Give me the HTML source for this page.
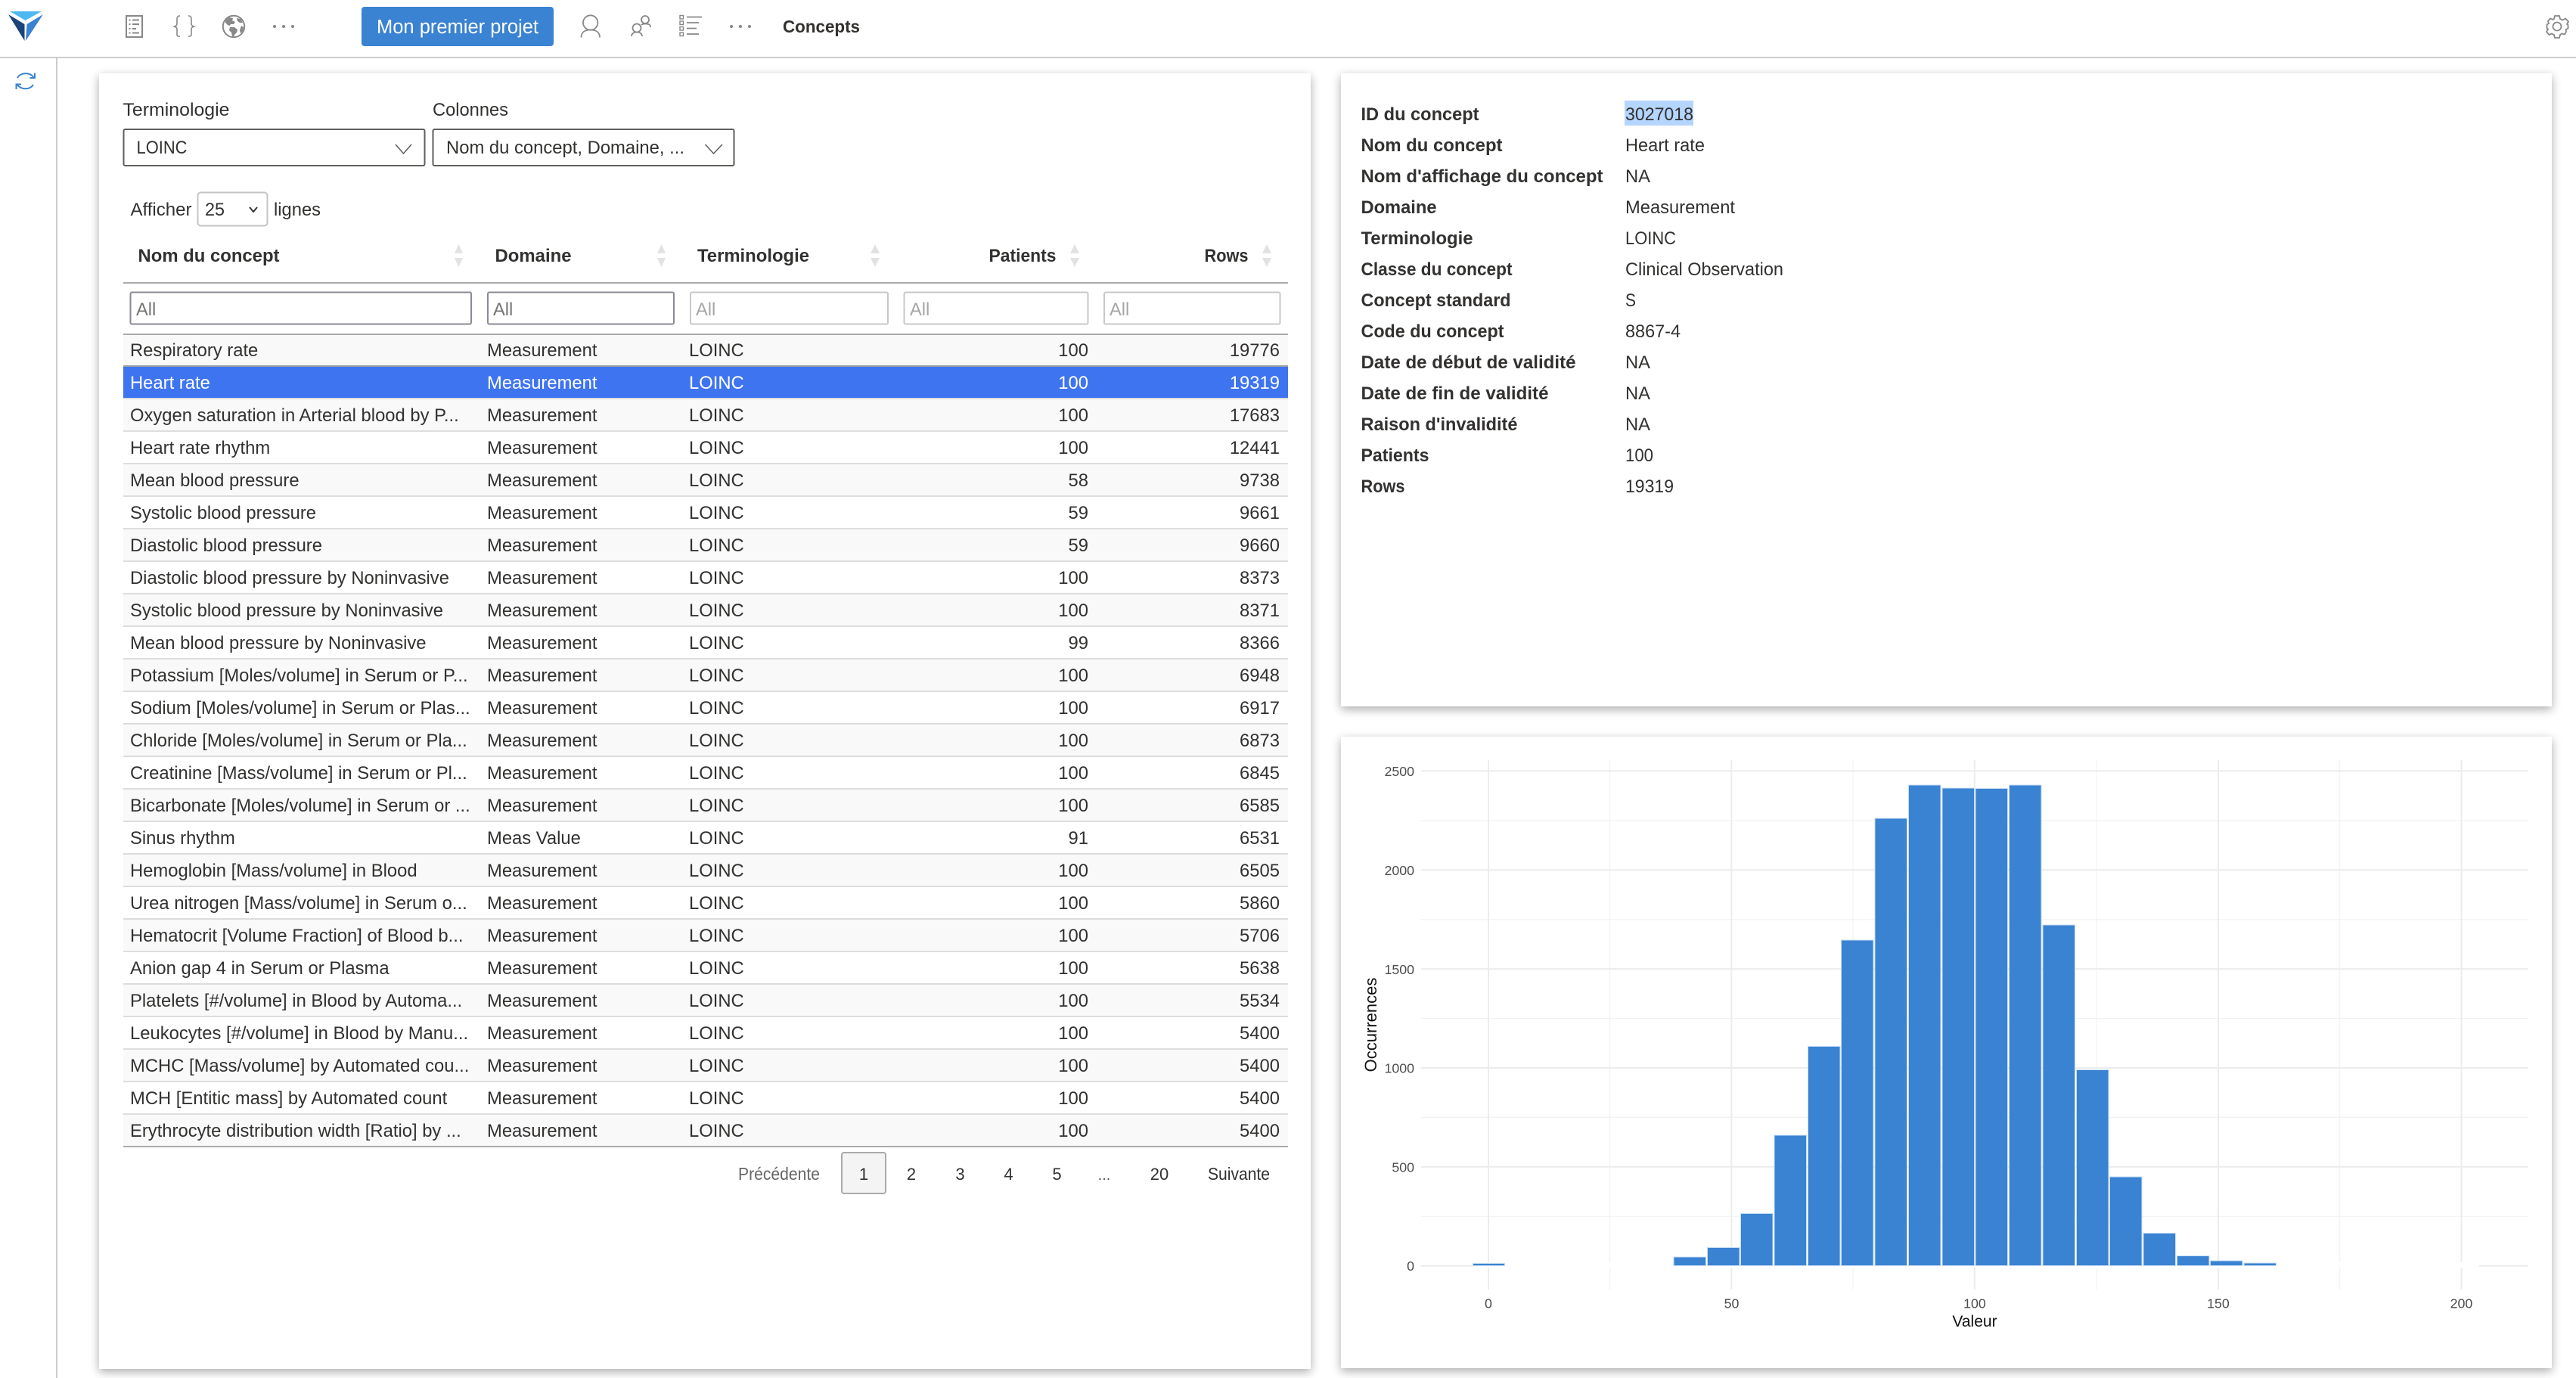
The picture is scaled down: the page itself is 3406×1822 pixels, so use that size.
<!DOCTYPE html>
<html lang="fr"><head><meta charset="utf-8"><title>Concepts</title>
<style>
html,body{margin:0;padding:0;background:#fff;width:3406px;height:1822px;overflow:hidden;font-family:"Liberation Sans",sans-serif;color:#323130}
.card{position:absolute;background:#fff;box-shadow:0 4px 12px rgba(0,0,0,.33)}
table{position:absolute;left:163px;top:442px;width:1540px;table-layout:fixed;border-collapse:separate;border-spacing:0;font-size:23.8px}
td{height:43px;box-sizing:border-box;padding:3px 10px 0 9px;border-bottom:2px solid #ddd;white-space:nowrap;overflow:hidden;vertical-align:middle;line-height:30px}
tr:nth-child(odd) td{background:#f9f9f9}
td:nth-child(n+4){text-align:right}
td:nth-child(5){padding-right:11px}
tr.s td{background:#3e74f0;color:#fff}
tr.p td{border-bottom-color:#9b9ea6}
tr:last-child td{border-bottom-color:#aaa}
svg{position:absolute;left:0;top:0}
svg text{font-family:"Liberation Sans",sans-serif;fill:#323130;font-size:23.7px}
.b{font-weight:700}
.g{fill:#4d4d4d;font-size:17.8px}
.ph{fill:#a6a6a6}
</style></head><body>
<div class="card" style="left:131px;top:97px;width:1602px;height:1713px"></div>
<div class="card" style="left:1773px;top:97px;width:1601px;height:837px"></div>
<div class="card" style="left:1773px;top:974px;width:1601px;height:835px"></div>

<table><colgroup><col style="width:472px"><col style="width:267px"><col style="width:283px"><col style="width:264px"><col style="width:254px"></colgroup><tbody>
<tr class="p"><td>Respiratory rate</td><td>Measurement</td><td>LOINC</td><td>100</td><td>19776</td></tr>
<tr class="s"><td>Heart rate</td><td>Measurement</td><td>LOINC</td><td>100</td><td>19319</td></tr>
<tr><td>Oxygen saturation in Arterial blood by P...</td><td>Measurement</td><td>LOINC</td><td>100</td><td>17683</td></tr>
<tr><td>Heart rate rhythm</td><td>Measurement</td><td>LOINC</td><td>100</td><td>12441</td></tr>
<tr><td>Mean blood pressure</td><td>Measurement</td><td>LOINC</td><td>58</td><td>9738</td></tr>
<tr><td>Systolic blood pressure</td><td>Measurement</td><td>LOINC</td><td>59</td><td>9661</td></tr>
<tr><td>Diastolic blood pressure</td><td>Measurement</td><td>LOINC</td><td>59</td><td>9660</td></tr>
<tr><td>Diastolic blood pressure by Noninvasive</td><td>Measurement</td><td>LOINC</td><td>100</td><td>8373</td></tr>
<tr><td>Systolic blood pressure by Noninvasive</td><td>Measurement</td><td>LOINC</td><td>100</td><td>8371</td></tr>
<tr><td>Mean blood pressure by Noninvasive</td><td>Measurement</td><td>LOINC</td><td>99</td><td>8366</td></tr>
<tr><td>Potassium [Moles/volume] in Serum or P...</td><td>Measurement</td><td>LOINC</td><td>100</td><td>6948</td></tr>
<tr><td>Sodium [Moles/volume] in Serum or Plas...</td><td>Measurement</td><td>LOINC</td><td>100</td><td>6917</td></tr>
<tr><td>Chloride [Moles/volume] in Serum or Pla...</td><td>Measurement</td><td>LOINC</td><td>100</td><td>6873</td></tr>
<tr><td>Creatinine [Mass/volume] in Serum or Pl...</td><td>Measurement</td><td>LOINC</td><td>100</td><td>6845</td></tr>
<tr><td>Bicarbonate [Moles/volume] in Serum or ...</td><td>Measurement</td><td>LOINC</td><td>100</td><td>6585</td></tr>
<tr><td>Sinus rhythm</td><td>Meas Value</td><td>LOINC</td><td>91</td><td>6531</td></tr>
<tr><td>Hemoglobin [Mass/volume] in Blood</td><td>Measurement</td><td>LOINC</td><td>100</td><td>6505</td></tr>
<tr><td>Urea nitrogen [Mass/volume] in Serum o...</td><td>Measurement</td><td>LOINC</td><td>100</td><td>5860</td></tr>
<tr><td>Hematocrit [Volume Fraction] of Blood b...</td><td>Measurement</td><td>LOINC</td><td>100</td><td>5706</td></tr>
<tr><td>Anion gap 4 in Serum or Plasma</td><td>Measurement</td><td>LOINC</td><td>100</td><td>5638</td></tr>
<tr><td>Platelets [#/volume] in Blood by Automa...</td><td>Measurement</td><td>LOINC</td><td>100</td><td>5534</td></tr>
<tr><td>Leukocytes [#/volume] in Blood by Manu...</td><td>Measurement</td><td>LOINC</td><td>100</td><td>5400</td></tr>
<tr><td>MCHC [Mass/volume] by Automated cou...</td><td>Measurement</td><td>LOINC</td><td>100</td><td>5400</td></tr>
<tr><td>MCH [Entitic mass] by Automated count</td><td>Measurement</td><td>LOINC</td><td>100</td><td>5400</td></tr>
<tr><td>Erythrocyte distribution width [Ratio] by ...</td><td>Measurement</td><td>LOINC</td><td>100</td><td>5400</td></tr>
</tbody></table>

<svg width="3406" height="1822" viewBox="0 0 3406 1822" xmlns="http://www.w3.org/2000/svg">
<!-- frame -->
<rect x="0" y="75" width="3406" height="2" fill="#ccc"/>
<rect x="74" y="77" width="2" height="1745" fill="#ccc"/>

<!-- logo -->
<polygon points="13,15 55,15 33.5,27" fill="#4fb8f1"/>
<polygon points="11,19 32.5,32 32.5,54" fill="#1a4379"/>
<polygon points="57,19 35.5,32 34,54" fill="#3a82d2"/>

<!-- doc icon -->
<g fill="none" stroke="#888" stroke-width="2">
<rect x="167" y="21" width="21" height="28"/>
<path d="M175 26.500H184M175 32H184M175 38H180M175 43.500H184"/>
<path d="M170.500 26.500h2M170.500 32h2M170.500 38h2M170.500 43.500h2"/>
<path stroke-width="1.600" d="M238 21C233.500 21 234 24 234 28V31C234 34 232 34.500 230.500 35C232 35.500 234 36 234 39V43C234 47 233.500 48 238 48"/>
<path stroke-width="1.600" d="M249 21C253.500 21 253 24 253 28V31C253 34 255 34.500 256.500 35C255 35.500 253 36 253 39V43C253 47 253.500 48 249 48"/>
<circle cx="309" cy="35" r="14.200"/>
</g>
<path fill="#888" d="M298 27l5-4 5 1-1 3 4 2-2 3-4 0-1 2-3-1-3-3zM304 36l6 0 4 3-1 4-3 3-1 3-2-1-1-5-3-3zM313 24l5 1 3 5-4 0-3-2zM319 34l3 2-1 5-3 3-1-4z"/>
<g fill="#888"><circle cx="363" cy="35" r="2"/><circle cx="375" cy="35" r="2"/><circle cx="387" cy="35" r="2"/>
<circle cx="967" cy="35" r="2"/><circle cx="979" cy="35" r="2"/><circle cx="991" cy="35" r="2"/></g>

<!-- project button -->
<rect x="478" y="9" width="254" height="52" rx="4" fill="#3a82d2"/>
<text x="498" y="44" style="fill:#fff;font-size:25.500px" textLength="214" lengthAdjust="spacingAndGlyphs">Mon premier projet</text>

<!-- persons / list -->
<g fill="none" stroke="#888" stroke-width="1.800">
<circle cx="780.700" cy="30" r="9.700"/>
<path d="M768.500 49.500C768.500 43 773 39.500 780.700 39.500C788.500 39.500 793 43 793 49.500"/>
<circle cx="842" cy="37" r="5.500"/>
<path d="M835 48C835 45 837.500 42.500 842 42.500C846.500 42.500 849 45 849 48"/>
<circle cx="853" cy="26" r="5"/>
<path d="M848 33C850 31 856 31 858.500 32.500C860 33.500 860 35 860 36"/>
<path d="M908 22.500H928M908 30H924M908 37.500H921M908 45H924"/>
<g stroke-width="1.400"><rect x="899" y="20.500" width="4.500" height="4.500"/><rect x="899" y="28" width="4.500" height="4.500"/><rect x="899" y="35.500" width="4.500" height="4.500"/><rect x="899" y="43" width="4.500" height="4.500"/></g>
</g>
<text x="1035" y="43" class="b" style="font-size:23px" textLength="102" lengthAdjust="spacingAndGlyphs">Concepts</text>

<!-- gear -->
<g fill="none" stroke="#888" stroke-width="1.800">
<circle cx="3381" cy="35" r="5.500"/>
<path d="M3378 21H3384L3385 25L3388.500 26.500L3392 24.500L3396 28.500L3394 32L3395.500 33L3395.500 37.500L3392.500 39L3393 42L3391 45.500L3387.500 44.500L3385 46L3384 50H3378L3377 46L3374 44.500L3370.500 46L3367 42L3369 38.500L3367.500 37.500V32.500L3370 31L3369 28L3372 24.500L3375.500 26L3377 25Z"/>
</g>

<!-- refresh -->
<g fill="none" stroke="#3a82d2" stroke-width="2">
<path d="M23 103C26 96.500 38 94.500 44.500 102"/>
<path d="M46 96.500V103H39.500"/>
<path d="M44 112C40 118.500 29 119.500 22.500 112"/>
<path d="M21.500 118V111.500H28"/>
</g>

<!-- form -->
<text x="162.500" y="153" style="font-size:24px" textLength="141" lengthAdjust="spacingAndGlyphs">Terminologie</text>
<text x="572" y="153" style="font-size:24px" textLength="100" lengthAdjust="spacingAndGlyphs">Colonnes</text>
<rect x="163.500" y="171" width="398" height="48" rx="2" fill="#fff" stroke="#605e5c" stroke-width="2"/>
<rect x="572.500" y="171" width="398" height="48" rx="2" fill="#fff" stroke="#605e5c" stroke-width="2"/>
<text x="180.500" y="203" textLength="67" lengthAdjust="spacingAndGlyphs">LOINC</text>
<text x="590" y="203" textLength="315" lengthAdjust="spacingAndGlyphs">Nom du concept, Domaine, ...</text>
<path d="M523 191L533.500 203L544 191M932.500 191L943.500 203L955 191" fill="none" stroke="#605e5c" stroke-width="1.500"/>

<text x="172.500" y="285" textLength="81" lengthAdjust="spacingAndGlyphs">Afficher</text>
<rect x="261.500" y="254.500" width="92" height="44" rx="4" fill="#fff" stroke="#c4c4c4" stroke-width="2"/>
<text x="271" y="285" textLength="26" lengthAdjust="spacingAndGlyphs">25</text>
<path d="M330 274L335 280L340 274" fill="none" stroke="#333" stroke-width="2"/>
<text x="362" y="285" textLength="62" lengthAdjust="spacingAndGlyphs">lignes</text>

<!-- table head -->
<g class="b">
<text x="182.500" y="346" class="b" textLength="187" lengthAdjust="spacingAndGlyphs">Nom du concept</text>
<text x="654.500" y="346" class="b" textLength="101" lengthAdjust="spacingAndGlyphs">Domaine</text>
<text x="922" y="346" class="b" textLength="148" lengthAdjust="spacingAndGlyphs">Terminologie</text>
<text x="1307.500" y="346" class="b" textLength="89" lengthAdjust="spacingAndGlyphs">Patients</text>
<text x="1592.500" y="346" class="b" textLength="58" lengthAdjust="spacingAndGlyphs">Rows</text>
</g>
<g fill="#e2e2e2">
<path d="M606.500 323L612 335H601ZM601 341H612L606.500 353Z"/>
<path d="M874.500 323L880 335H869ZM869 341H880L874.500 353Z"/>
<path d="M1157 323L1163 335H1151ZM1151 341H1163L1157 353Z"/>
<path d="M1421 323L1427 335H1415ZM1415 341H1427L1421 353Z"/>
<path d="M1675 323L1681 335H1669ZM1669 341H1681L1675 353Z"/>
</g>
<rect x="163" y="373" width="1540" height="2" fill="#aaa"/>
<rect x="163" y="441" width="1540" height="2" fill="#aaa"/>
<g fill="#fff" stroke-width="2">
<rect x="172.500" y="386.500" width="450.500" height="42" rx="2" stroke="#8a8a96"/>
<rect x="645" y="386.500" width="246" height="42" rx="2" stroke="#8a8a96"/>
<rect x="913" y="386.500" width="261" height="42" rx="2" stroke="#c8c8c8"/>
<rect x="1195.500" y="386.500" width="243" height="42" rx="2" stroke="#c8c8c8"/>
<rect x="1460" y="386.500" width="232.500" height="42" rx="2" stroke="#c8c8c8"/>
</g>
<text x="180" y="417" style="fill:#757575">All</text>
<text x="652" y="417" style="fill:#757575">All</text>
<text x="920" y="417" class="ph">All</text>
<text x="1203" y="417" class="ph">All</text>
<text x="1467" y="417" class="ph">All</text>

<!-- pagination -->
<rect x="1113" y="1524" width="58" height="54" rx="3" fill="#f4f4f4" stroke="#aaa" stroke-width="2"/>
<g style="font-size:23px">
<text x="976" y="1560" style="fill:#666;font-size:23px" textLength="108" lengthAdjust="spacingAndGlyphs">Précédente</text>
<g text-anchor="middle">
<text x="1142" y="1560" style="font-size:22px">1</text>
<text x="1205" y="1560" style="font-size:22px">2</text>
<text x="1269.500" y="1560" style="font-size:22px">3</text>
<text x="1333.500" y="1560" style="font-size:22px">4</text>
<text x="1397.500" y="1560" style="font-size:22px">5</text>
<text x="1460" y="1560" style="font-size:20px;fill:#555">...</text>
<text x="1533" y="1560" style="font-size:22px">20</text>
</g>
<text x="1597" y="1560" style="font-size:23px" textLength="82" lengthAdjust="spacingAndGlyphs">Suivante</text>
</g>

<!-- details -->
<rect x="2148" y="133" width="91" height="33" fill="#b4d5fe"/>
<g>
<text class="b" x="1799.500" y="159" textLength="156" lengthAdjust="spacingAndGlyphs">ID du concept</text>
<text class="b" x="1799.500" y="200" textLength="187" lengthAdjust="spacingAndGlyphs">Nom du concept</text>
<text class="b" x="1799.500" y="241" textLength="320" lengthAdjust="spacingAndGlyphs">Nom d'affichage du concept</text>
<text class="b" x="1799.500" y="282" textLength="100" lengthAdjust="spacingAndGlyphs">Domaine</text>
<text class="b" x="1799.500" y="323" textLength="148" lengthAdjust="spacingAndGlyphs">Terminologie</text>
<text class="b" x="1799.500" y="364" textLength="200" lengthAdjust="spacingAndGlyphs">Classe du concept</text>
<text class="b" x="1799.500" y="405" textLength="198" lengthAdjust="spacingAndGlyphs">Concept standard</text>
<text class="b" x="1799.500" y="446" textLength="189" lengthAdjust="spacingAndGlyphs">Code du concept</text>
<text class="b" x="1799.500" y="487" textLength="284" lengthAdjust="spacingAndGlyphs">Date de début de validité</text>
<text class="b" x="1799.500" y="528" textLength="248" lengthAdjust="spacingAndGlyphs">Date de fin de validité</text>
<text class="b" x="1799.500" y="569" textLength="207" lengthAdjust="spacingAndGlyphs">Raison d'invalidité</text>
<text class="b" x="1799.500" y="610" textLength="90" lengthAdjust="spacingAndGlyphs">Patients</text>
<text class="b" x="1799.500" y="651" textLength="58" lengthAdjust="spacingAndGlyphs">Rows</text>
<text x="2149" y="159" textLength="90" lengthAdjust="spacingAndGlyphs">3027018</text>
<text x="2149" y="200" textLength="105" lengthAdjust="spacingAndGlyphs">Heart rate</text>
<text x="2149" y="241" textLength="33" lengthAdjust="spacingAndGlyphs">NA</text>
<text x="2149" y="282" textLength="145" lengthAdjust="spacingAndGlyphs">Measurement</text>
<text x="2149" y="323" textLength="67" lengthAdjust="spacingAndGlyphs">LOINC</text>
<text x="2149" y="364" textLength="209" lengthAdjust="spacingAndGlyphs">Clinical Observation</text>
<text x="2149" y="405" textLength="14" lengthAdjust="spacingAndGlyphs">S</text>
<text x="2149" y="446" textLength="73" lengthAdjust="spacingAndGlyphs">8867-4</text>
<text x="2149" y="487" textLength="33" lengthAdjust="spacingAndGlyphs">NA</text>
<text x="2149" y="528" textLength="33" lengthAdjust="spacingAndGlyphs">NA</text>
<text x="2149" y="569" textLength="33" lengthAdjust="spacingAndGlyphs">NA</text>
<text x="2149" y="610" textLength="37" lengthAdjust="spacingAndGlyphs">100</text>
<text x="2149" y="651" textLength="64" lengthAdjust="spacingAndGlyphs">19319</text>
</g>

<!-- chart grid -->
<g stroke="#f2f2f2" stroke-width="1.200">
<path d="M1879 1084.900H3343M1879 1215.800H3343M1879 1346.600H3343M1879 1477.400H3343M1879 1608.300H3343"/>
<path d="M2128.600 1005V1705M2450 1005V1705M2772 1005V1705M3093.700 1005V1705"/>
</g>
<g stroke="#ececec" stroke-width="2">
<path d="M1879 1019.400H3343M1879 1150.300H3343M1879 1281.100H3343M1879 1412H3343M1879 1542.800H3343M1879 1673.700H3343"/>
<path d="M1968 1005V1705M2289.300 1005V1705M2610.800 1005V1705M2933 1005V1705M3254.500 1005V1705"/>
</g>
<rect x="1947" y="1669" width="1331" height="7" fill="#fff"/>
<!-- bars -->
<g fill="#3a82d2" stroke="#c8def5" stroke-width="1">
<rect x="1947.500" y="1670.500" width="42" height="3"/>
<rect x="2213" y="1662" width="42.500" height="11.500"/>
<rect x="2257.500" y="1649.500" width="42.500" height="24"/>
<rect x="2301.500" y="1604.500" width="42.500" height="69"/>
<rect x="2346" y="1501" width="42.500" height="172.500"/>
<rect x="2390.500" y="1383.500" width="42.500" height="290"/>
<rect x="2434.500" y="1243" width="42.500" height="430.500"/>
<rect x="2479" y="1082" width="42.500" height="591.500"/>
<rect x="2523.500" y="1038" width="42.500" height="635.500"/>
<rect x="2568" y="1042" width="42.500" height="631.500"/>
<rect x="2612" y="1042.500" width="42.500" height="631"/>
<rect x="2656.500" y="1038" width="42.500" height="635.500"/>
<rect x="2701" y="1223" width="42.500" height="450.500"/>
<rect x="2745.500" y="1414.500" width="42.500" height="259"/>
<rect x="2789.500" y="1556" width="42.500" height="117.500"/>
<rect x="2834" y="1630.500" width="42.500" height="43"/>
<rect x="2878.500" y="1660.500" width="42.500" height="13"/>
<rect x="2922.500" y="1667" width="42.500" height="6.500"/>
<rect x="2967" y="1670" width="42.500" height="3.500"/>
</g>
<!-- axes -->
<g text-anchor="end">
<text class="g" x="1870" y="1026">2500</text>
<text class="g" x="1870" y="1157">2000</text>
<text class="g" x="1870" y="1288">1500</text>
<text class="g" x="1870" y="1418.500">1000</text>
<text class="g" x="1870" y="1549.500">500</text>
<text class="g" x="1870" y="1680">0</text>
</g>
<g text-anchor="middle">
<text class="g" x="1968" y="1729.500">0</text>
<text class="g" x="2289.500" y="1729.500">50</text>
<text class="g" x="2611" y="1729.500">100</text>
<text class="g" x="2933" y="1729.500">150</text>
<text class="g" x="3254.500" y="1729.500">200</text>
<text x="2611" y="1754" style="fill:#111;font-size:21px">Valeur</text>
<text transform="translate(1820 1355) rotate(-90)" x="0" y="0" style="fill:#111;font-size:22px">Occurrences</text>
</g>
</svg>
</body></html>
